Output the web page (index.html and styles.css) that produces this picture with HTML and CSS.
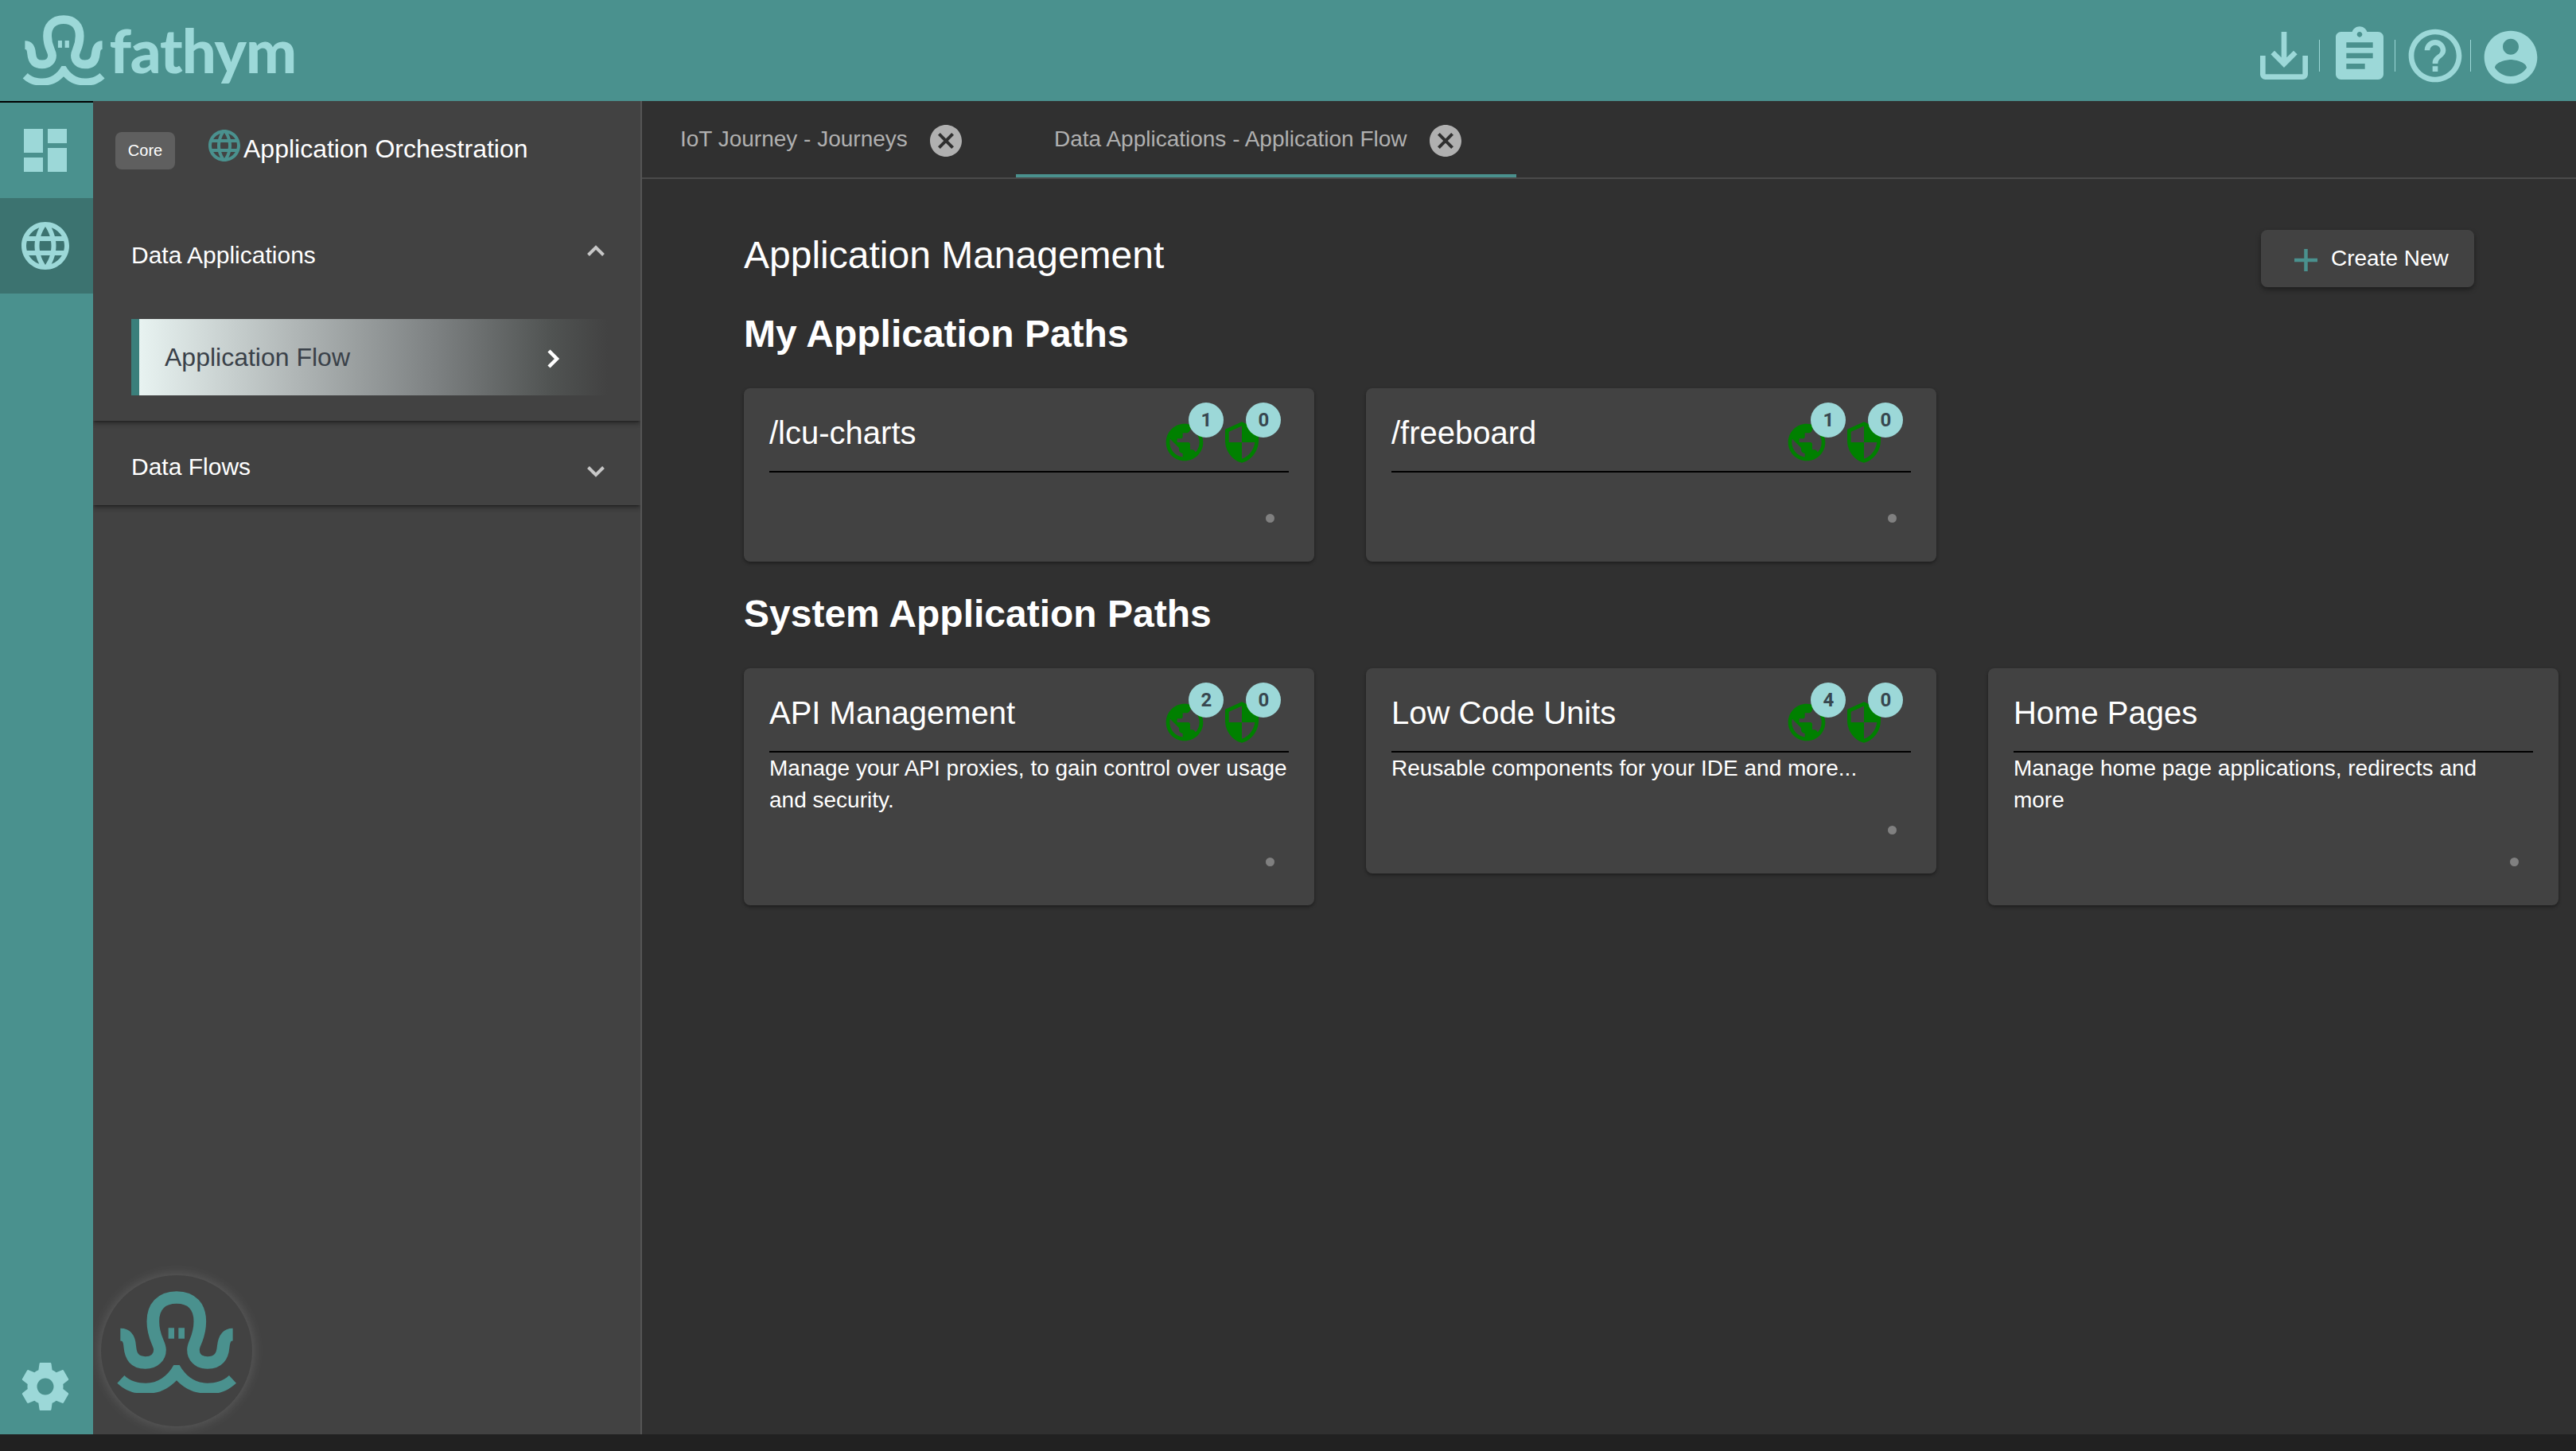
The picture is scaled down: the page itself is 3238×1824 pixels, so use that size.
FILE: index.html
```html
<!DOCTYPE html>
<html lang="en">
<head>
<meta charset="utf-8">
<title>Fathym - Application Orchestration</title>
<link rel="stylesheet" href="styles.css">
</head>
<body>
<svg class="defs" aria-hidden="true">
  <symbol id="octopus" viewBox="435 180 460 400">
    <path fill="none" stroke="currentColor" stroke-width="47" d="M454 353C480 353 488 372 490 400C493 435 508 459 548 459C583 459 603 437 603 410C603 385 577 365 577 303C577 250 607 213 666 213C725 213 754 250 754 303C754 365 729 385 729 410C729 437 748 459 783 459C823 459 839 435 842 400C845 372 852 353 878 353"/>
    <path fill="currentColor" d="M442 536L469 507C490 528 520 536 550 536C595 536 630 512 655 468L677 468C702 512 737 536 782 536C812 536 842 528 864 507L891 536C865 560 835 573 818 573L755 573C720 570 690 550 666 526C642 550 612 570 580 573L515 573C495 571 465 558 442 536ZM635 328h22v40h-22zM673 328h23v40h-23z"/>
  </symbol>
  <symbol id="language" viewBox="0 0 24 24"><path fill="currentColor" d="M11.99 2C6.47 2 2 6.48 2 12s4.47 10 9.99 10C17.52 22 22 17.52 22 12S17.52 2 11.99 2zm6.93 6h-2.95c-.32-1.25-.78-2.45-1.38-3.56 1.84.63 3.37 1.91 4.33 3.56zM12 4.04c.83 1.2 1.48 2.53 1.91 3.96h-3.82c.43-1.43 1.08-2.76 1.91-3.96zM4.26 14C4.1 13.36 4 12.69 4 12s.1-1.36.26-2h3.38c-.08.66-.14 1.32-.14 2 0 .68.06 1.34.14 2H4.26zm.82 2h2.95c.32 1.25.78 2.45 1.38 3.56-1.84-.63-3.37-1.9-4.33-3.56zm2.95-8H5.08c.96-1.66 2.49-2.93 4.33-3.56C8.81 5.55 8.35 6.75 8.03 8zM12 19.96c-.83-1.2-1.48-2.53-1.91-3.96h3.82c-.43 1.43-1.08 2.76-1.91 3.96zM14.34 14H9.66c-.09-.66-.16-1.32-.16-2 0-.68.07-1.35.16-2h4.68c.09.65.16 1.32.16 2 0 .68-.07 1.34-.16 2zm.25 5.56c.6-1.11 1.06-2.31 1.38-3.56h2.95c-.96 1.65-2.49 2.93-4.33 3.56zM16.36 14c.08-.66.14-1.32.14-2 0-.68-.06-1.34-.14-2h3.38c.16.64.26 1.31.26 2s-.1 1.36-.26 2h-3.38z"/></symbol>
  <symbol id="public" viewBox="0 0 24 24"><path fill="currentColor" d="M12 2C6.48 2 2 6.48 2 12s4.48 10 10 10 10-4.48 10-10S17.52 2 12 2zm-1 17.93c-3.95-.49-7-3.85-7-7.93 0-.62.08-1.21.21-1.79L9 15v1c0 1.1.9 2 2 2v1.930zm6.900-2.540c-.26-.81-1-1.390-1.900-1.390h-1v-3c0-.55-.45-1-1-1H8v-2h2c.55 0 1-.45 1-1V7h2c1.100 0 2-.9 2-2v-.41c2.930 1.190 5 4.060 5 7.410 0 2.080-.8 3.970-2.100 5.390z"/></symbol>
  <symbol id="security" viewBox="0 0 24 24"><path fill="currentColor" d="M12 1L3 5v6c0 5.550 3.840 10.740 9 12 5.160-1.260 9-6.450 9-12V5l-9-4zm0 10.990h7c-.53 4.120-3.280 7.790-7 8.940V12H5V6.300l7-3.110v8.800z"/></symbol>
  <symbol id="cancel" viewBox="0 0 24 24"><path fill="currentColor" d="M12 2C6.470 2 2 6.470 2 12s4.470 10 10 10 10-4.470 10-10S17.530 2 12 2zm5 13.590L15.590 17 12 13.410 8.410 17 7 15.590 10.590 12 7 8.410 8.410 7 12 10.590 15.590 7 17 8.410 13.410 12 17 15.590z"/></symbol>
</svg>

<header class="topbar">
  <div class="brand">
    <svg class="brand-mark"><use href="#octopus"/></svg>
    <span class="brand-name">fathym</span>
  </div>
  <nav class="tools">
    <svg viewBox="0 0 24 24"><path d="M19 12v7H5v-7H3v7c0 1.100.9 2 2 2h14c1.100 0 2-.9 2-2v-7h-2zm-6 .67l2.590-2.580L17 11.500l-5 5-5-5 1.410-1.410L11 12.670V3h2z"/></svg>
    <i></i>
    <svg viewBox="0 0 24 24"><path d="M19 3h-4.180C14.400 1.840 13.300 1 12 1c-1.300 0-2.400.84-2.820 2H5c-1.100 0-2 .9-2 2v14c0 1.100.9 2 2 2h14c1.100 0 2-.9 2-2V5c0-1.100-.9-2-2-2zm-7 0c.55 0 1 .45 1 1s-.45 1-1 1-1-.45-1-1 .45-1 1-1zm2 14H7v-2h7v2zm3-4H7v-2h10v2zm0-4H7V7h10v2z"/></svg>
    <i></i>
    <svg viewBox="0 0 24 24"><path d="M11 18h2v-2h-2v2zm1-16C6.480 2 2 6.480 2 12s4.480 10 10 10 10-4.480 10-10S17.520 2 12 2zm0 18c-4.410 0-8-3.590-8-8s3.590-8 8-8 8 3.590 8 8-3.590 8-8 8zm0-14c-2.210 0-4 1.790-4 4h2c0-1.100.9-2 2-2s2 .9 2 2c0 2-3 1.750-3 5h2c0-2.250 3-2.500 3-5 0-2.210-1.790-4-4-4z"/></svg>
    <i></i>
    <svg class="account" viewBox="0 0 24 24"><path d="M12 2C6.480 2 2 6.480 2 12s4.480 10 10 10 10-4.480 10-10S17.520 2 12 2zm0 3c1.660 0 3 1.340 3 3s-1.340 3-3 3-3-1.340-3-3 1.340-3 3-3zm0 14.200c-2.500 0-4.710-1.280-6-3.220.03-1.990 4-3.080 6-3.080 1.990 0 5.970 1.090 6 3.080-1.290 1.940-3.500 3.220-6 3.220z"/></svg>
  </nav>
</header>

<div class="shell">
  <nav class="rail">
    <a class="rail-item"><svg viewBox="0 0 24 24"><path fill="currentColor" d="M3 13h8V3H3v10zm0 8h8v-6H3v6zm10 0h8V11h-8v10zm0-18v6h8V3h-8z"/></svg></a>
    <a class="rail-item active"><svg><use href="#language"/></svg></a>
    <a class="rail-item settings"><svg viewBox="0 0 24 24"><path fill="currentColor" d="M19.430 12.980c.04-.32.07-.64.07-.98s-.03-.66-.07-.98l2.110-1.650c.19-.15.24-.42.12-.64l-2-3.460c-.12-.22-.39-.3-.61-.22l-2.490 1c-.52-.4-1.080-.73-1.690-.98l-.38-2.650C14.460 2.180 14.250 2 14 2h-4c-.25 0-.46.18-.49.42l-.38 2.650c-.61.25-1.170.59-1.690.98l-2.490-1c-.23-.09-.49 0-.61.22l-2 3.460c-.13.22-.07.49.12.64l2.110 1.650c-.04.32-.07.65-.07.98s.03.66.07.98l-2.110 1.650c-.19.15-.24.42-.12.64l2 3.460c.12.22.39.3.61.22l2.490-1c.52.4 1.080.73 1.690.98l.38 2.650c.03.24.24.42.49.42h4c.25 0 .46-.18.49-.42l.38-2.650c.61-.25 1.170-.59 1.690-.98l2.490 1c.23.09.49 0 .61-.22l2-3.460c.12-.22.07-.49-.12-.64l-2.110-1.650zM12 15.500c-1.930 0-3.500-1.570-3.500-3.500s1.570-3.500 3.500-3.500 3.500 1.570 3.500 3.500-1.570 3.500-3.500 3.500z"/></svg></a>
  </nav>

  <aside class="side">
    <div class="side-head">
      <span class="chip">Core</span>
      <svg><use href="#language"/></svg>
      <span class="side-title">Application Orchestration</span>
    </div>
    <section class="panel expanded">
      <div class="panel-head">Data Applications
        <svg class="chevron up" viewBox="0 0 22 14"><path d="M1.500 12.500L11 3l9.500 9.500"/></svg>
      </div>
      <a class="panel-item">Application Flow
        <svg viewBox="0 0 16 24"><path d="M2 2l10 10L2 22"/></svg>
      </a>
    </section>
    <section class="panel">
      <div class="panel-head closed">Data Flows
        <svg class="chevron down" viewBox="0 0 22 14"><path d="M1.500 1.500L11 11l9.500-9.500"/></svg>
      </div>
    </section>
    <button class="assistant" aria-label="Assistant"><svg><use href="#octopus"/></svg></button>
  </aside>

  <div class="work">
    <div class="tabs">
      <div class="tab">IoT Journey - Journeys<svg><use href="#cancel"/></svg></div>
      <div class="tab current">Data Applications - Application Flow<svg><use href="#cancel"/></svg></div>
    </div>
    <main>
      <div class="main-head">
        <h1>Application Management</h1>
        <button class="create"><svg viewBox="0 0 30 28"><path d="M0 14h29M14.500 0v28"/></svg>Create New</button>
      </div>

      <h2>My Application Paths</h2>
      <div class="cards">
        <article class="card">
          <div class="card-head"><h3>/lcu-charts</h3>
            <span class="stat"><svg><use href="#public"/></svg><b>1</b></span>
            <span class="stat"><svg><use href="#security"/></svg><b>0</b></span>
          </div>
          <div class="card-foot"><i></i></div>
        </article>
        <article class="card">
          <div class="card-head"><h3>/freeboard</h3>
            <span class="stat"><svg><use href="#public"/></svg><b>1</b></span>
            <span class="stat"><svg><use href="#security"/></svg><b>0</b></span>
          </div>
          <div class="card-foot"><i></i></div>
        </article>
      </div>

      <h2 class="second">System Application Paths</h2>
      <div class="cards">
        <article class="card">
          <div class="card-head"><h3>API Management</h3>
            <span class="stat"><svg><use href="#public"/></svg><b>2</b></span>
            <span class="stat"><svg><use href="#security"/></svg><b>0</b></span>
          </div>
          <p>Manage your API proxies, to gain control over usage and security.</p>
          <div class="card-foot"><i></i></div>
        </article>
        <article class="card">
          <div class="card-head"><h3>Low Code Units</h3>
            <span class="stat"><svg><use href="#public"/></svg><b>4</b></span>
            <span class="stat"><svg><use href="#security"/></svg><b>0</b></span>
          </div>
          <p>Reusable components for your IDE and more...</p>
          <div class="card-foot"><i></i></div>
        </article>
        <article class="card">
          <div class="card-head"><h3>Home Pages</h3></div>
          <p>Manage home page applications, redirects and more</p>
          <div class="card-foot"><i></i></div>
        </article>
      </div>
    </main>
  </div>
</div>
<footer class="statusbar"></footer>
</body>
</html>
```

FILE: styles.css
```css
:root {
  --teal: #4a918e;
  --teal-dark: #3c7370;
  --aqua: #9cd8d8;
  --surface: #424242;
  --canvas: #303030;
}

* { box-sizing: border-box; }

body {
  margin: 0;
  height: 1824px;
  display: flex;
  flex-direction: column;
  overflow: hidden;
  background: var(--canvas);
  color: #fff;
  font-family: "Liberation Sans", Arial, sans-serif;
  font-size: 28px;
}

svg { display: block; flex: none; }
button { font: inherit; color: inherit; border: 0; padding: 0; }
h1, h2, h3, p { margin: 0; }

.defs { position: absolute; width: 0; height: 0; }

/* Top bar */
.topbar {
  flex: none;
  height: 127px;
  display: flex;
  justify-content: space-between;
  background: var(--teal);
  color: var(--aqua);
}

.brand { display: flex; padding: 17px 0 0 27px; }
.brand-mark { width: 105.500px; height: 91.700px; }
.brand-name {
  margin-left: 5px;
  font: 900 76px/92px Lato, sans-serif;
  letter-spacing: -1.100px;
}

.tools { display: flex; padding: 30px 42px 0 0; }
.tools svg { width: 80px; height: 80px; fill: currentColor; }
.tools i { width: 1px; height: 40px; margin: 20px 10px 0 4px; background: currentColor; }
.tools .account { margin-top: 2px; }

.shell { flex: 1; display: flex; min-height: 0; }

/* Icon rail */
.rail {
  flex: none;
  width: 117px;
  display: flex;
  flex-direction: column;
  border-top: 2px solid #000;
  background: var(--teal);
  color: var(--aqua);
}
.rail-item {
  height: 120px;
  display: flex;
  align-items: center;
  padding-left: 21px;
}
.rail-item.active { background: var(--teal-dark); }
.rail-item svg { width: 72px; height: 72px; }
.rail-item.settings { margin-top: auto; }

/* Side panel */
.side {
  flex: none;
  width: 690px;
  display: flex;
  flex-direction: column;
  border-right: 2px solid #555;
  background: var(--surface);
}
.side-head { height: 129px; flex: none; display: flex; padding: 32px 0 0 28px; }
.side-head svg { width: 48px; height: 48px; margin-left: 38px; color: var(--teal); }
.chip {
  width: 75px;
  height: 47px;
  margin-top: 7px;
  border-radius: 8px;
  background: #5f5f5f;
  font-size: 20px;
  line-height: 46px;
  text-align: center;
}
.side-title { font-size: 32px; line-height: 56px; }

.panel {
  position: relative;
  padding: 0 39px 0 48px;
  font-size: 30px;
  background: var(--surface);
  box-shadow: 0 3px 2px -2px rgba(0, 0, 0, .35), 0 4px 5px rgba(0, 0, 0, .2), 0 2px 8px rgba(0, 0, 0, .14);
  clip-path: inset(0 0 -14px 0);
}
.panel.expanded { z-index: 1; }
.panel-head {
  height: 145px;
  display: flex;
  justify-content: space-between;
  line-height: 40px;
  padding: 45px 6px 0 0;
}
.panel-head.closed { height: 106px; padding-top: 38px; }
.chevron { width: 22px; height: 14px; fill: none; stroke: #c7c7c7; stroke-width: 4; }
.chevron.up { margin-top: 7px; }
.chevron.down { margin-top: 19px; }
.panel-item {
  height: 96px;
  margin: 0 -4px 32px 0;
  display: flex;
  align-items: center;
  justify-content: space-between;
  padding: 0 66px 0 32px;
  border-left: 10px solid #3b7f7b;
  background: linear-gradient(90deg, #e8f3f1, #b0b6b6 33%, #7e8283 62%, #505352 87%, var(--surface) 99%);
  color: #3a4149;
  font-size: 32px;
}
.panel-item svg { width: 16px; height: 24px; margin-top: 4px; fill: none; stroke: #fff; stroke-width: 4.500; }

.assistant {
  width: 190px;
  height: 190px;
  margin: auto 0 10px 10px;
  display: flex;
  justify-content: center;
  padding-top: 17px;
  border-radius: 50%;
  background: var(--surface);
  box-shadow: 0 0 16px rgba(255, 255, 255, .17);
  color: var(--teal);
}
.assistant svg { width: 153.300px; height: 133.300px; }

/* Tabs */
.work { flex: 1; min-width: 0; }
.tabs { height: 98px; display: flex; border-bottom: 2px solid #4a4a4a; color: #b0b0b0; }
.tab {
  display: flex;
  padding: 26px 65px 0 48px;
  line-height: 44px;
  border-bottom: 4px solid transparent;
  white-space: nowrap;
}
.tab.current { border-color: var(--teal); }
.tab svg { width: 48px; height: 48px; margin-left: 24px; }
.tab:first-child { width: 470px; }

/* Main content */
main { padding: 63px 0 0 128px; }
.main-head { display: flex; justify-content: space-between; padding-right: 128px; }
h1, h2 { font-size: 48px; line-height: 64px; }
h1 { margin-top: 1px; font-weight: 400; }
h2 { margin: 27px 0 36px; }
h2.second { margin-top: 34px; }

.create {
  width: 268px;
  height: 72px;
  margin: 1px 0 0;
  display: flex;
  padding-left: 42px;
  border-radius: 8px;
  background: var(--surface);
  box-shadow: 0 3px 6px rgba(0, 0, 0, .4);
  line-height: 71px;
}
.create svg { width: 30px; height: 28px; margin: 24px 16px 0 0; stroke: var(--teal); stroke-width: 4.500; }

.cards {
  display: grid;
  grid-template-columns: repeat(3, 717.400px);
  column-gap: 64.600px;
  align-items: start;
}
.card {
  padding: 24px 32px 0;
  border-radius: 8px;
  background: var(--surface);
  box-shadow: 0 2px 4px rgba(0, 0, 0, .4);
}
.card-head {
  height: 82px;
  display: flex;
  padding-right: 31px;
  border-bottom: 2px solid #000;
}
.card h3 { flex: 1; font-size: 40px; font-weight: 400; line-height: 64px; }
.card p { line-height: 40px; }
.card-foot { height: 112px; display: flex; justify-content: flex-end; padding: 52px 18px 0 0; }
.card-foot i { width: 11px; height: 11px; border-radius: 50%; background: #808080; }

.stat { position: relative; width: 56px; height: 56px; margin-top: 16px; color: #008000; }
.stat + .stat { margin-left: 16px; }
.stat svg { width: 56px; height: 56px; }
.stat b {
  position: absolute;
  left: 33px;
  top: -22px;
  width: 44px;
  height: 44px;
  border-radius: 50%;
  background: var(--aqua);
  color: #37474f;
  font: 700 24px/44px Roboto, sans-serif;
  text-align: center;
}

.statusbar { flex: none; height: 21px; background: #212121; }
```
